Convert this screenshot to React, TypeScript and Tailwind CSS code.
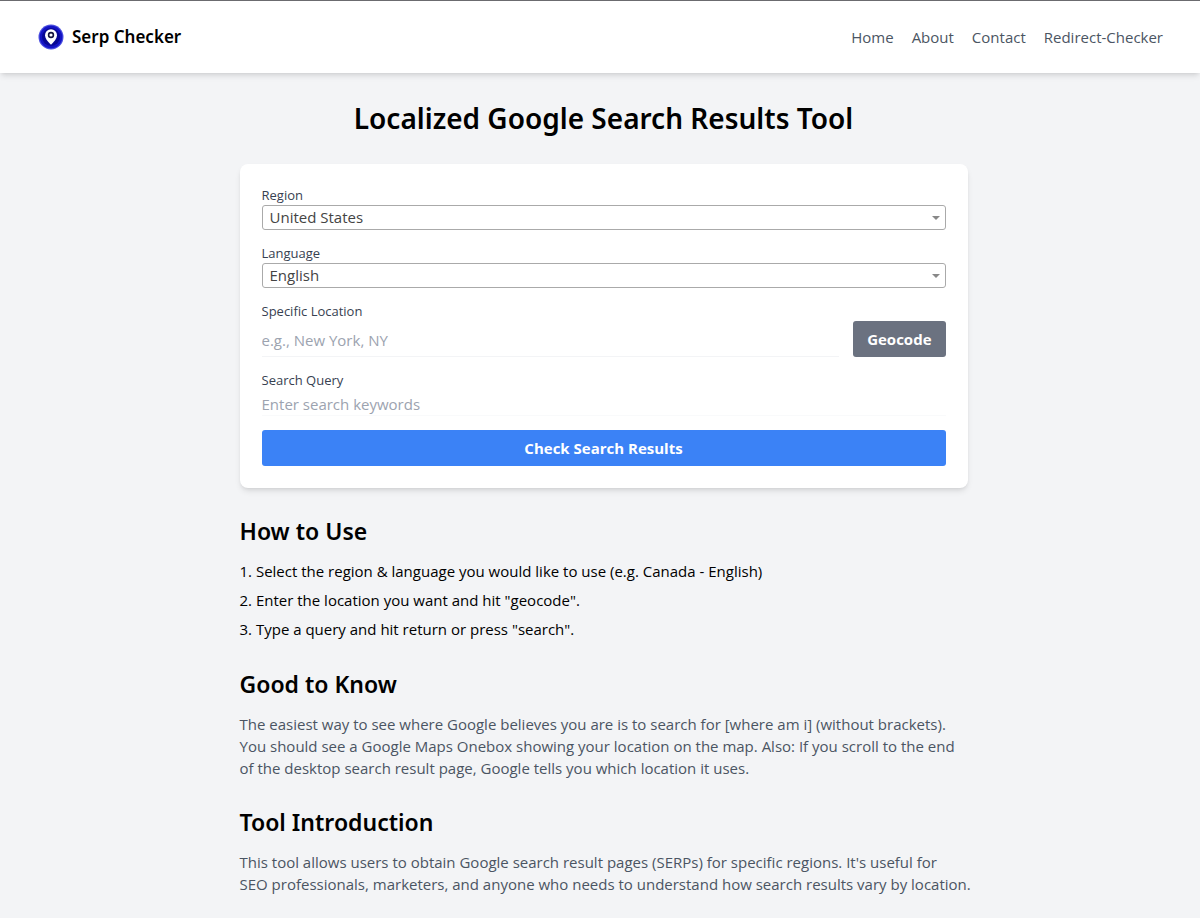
function Logo() {
  return (
    <svg viewBox="0 0 26 26" className="size-[26px]" aria-hidden="true">
      <circle cx="13" cy="13" r="12.500" fill="#4a4ee0" />
      <circle cx="13" cy="13" r="11.300" fill="#1414c4" />
      <circle cx="13" cy="13" r="9" fill="#080894" />
      <path d="M13 20.800c-3.400-3.600-6-6.400-6-9.600a6 6 0 0 1 12 0c0 3.200-2.600 6-6 9.600z" fill="#fff" />
      <circle cx="13" cy="11" r="2.400" fill="#fff" stroke="#14143c" strokeWidth="1.600" />
    </svg>
  );
}

const links = ["Home", "About", "Contact", "Redirect-Checker"];

const sectionHeading = "mb-[14px] font-['Noto_Sans',sans-serif] text-[23px] leading-[29px] font-semibold";

function SelectField({ id, label, options }: { id: string; label: string; options: string[] }) {
  return (
    <div className="mb-[14px]">
      <label htmlFor={id} className="block text-[13px] leading-[19px] text-[#374151]">{label}</label>
      <div className="grid items-center">
        <select id={id} className="col-start-1 row-start-1 h-[25px] w-full appearance-none rounded-[3px] border border-[#aaa] bg-white px-[7px] text-[15px] leading-[23px] text-[#444]">
          {options.map((o) => <option key={o}>{o}</option>)}
        </select>
        <svg viewBox="0 0 8 4" className="pointer-events-none col-start-1 row-start-1 mr-[6px] h-1 w-2 justify-self-end" aria-hidden="true">
          <path d="M0 0h8L4 4z" fill="#888" />
        </svg>
      </div>
    </div>
  );
}

export default function App() {
  return (
    <div className="min-h-screen bg-[#f3f4f6] font-['Open_Sans','Noto_Sans',sans-serif] text-[15px] leading-[22px] text-black">
      <header className="flex h-[73px] items-center justify-between border-t border-[#6b6b6f] bg-white pr-[37px] pl-[38px] shadow-md">
        <a href="#" className="flex items-center gap-2 font-['Noto_Sans',sans-serif] text-[17px] font-semibold"><Logo />Serp Checker</a>
        <nav className="flex gap-[18px] text-[#4b5563]">
          {links.map((l) => <a key={l} href="#">{l}</a>)}
        </nav>
      </header>
      <div className="pl-[7px]">
        <main className="mx-auto max-w-[728px] pt-[29px] pb-6">
          <h1 className="mb-[29px] text-center font-['Noto_Sans',sans-serif] text-[28px] leading-[33px] font-semibold">Localized Google Search Results Tool</h1>
          <form className="mb-[29px] rounded-lg bg-white p-[22px] shadow-md">
            <SelectField id="region" label="Region" options={["United States", "Canada"]} />
            <SelectField id="language" label="Language" options={["English", "French"]} />
            <div className="mb-[14px] flex items-end gap-[14px]">
              <div className="flex-1">
                <label htmlFor="location" className="block text-[13px] leading-[19px] text-[#374151]">Specific Location</label>
                <input id="location" placeholder="e.g., New York, NY" className="block h-9 w-full border-b border-[#f3f4f6] pt-0.5 placeholder:text-[#9ca3af]" />
              </div>
              <button type="button" className="h-9 rounded-[3px] bg-[#6b7280] px-[14px] font-bold text-white">Geocode</button>
            </div>
            <label htmlFor="query" className="block text-[13px] leading-[19px] text-[#374151]">Search Query</label>
            <input id="query" placeholder="Enter search keywords" className="mb-[14px] block h-[26px] w-full border-b border-[#f9fafb] pt-0.5 placeholder:text-[#9ca3af]" />
            <button type="submit" className="block h-9 w-full rounded-[3px] bg-[#3b82f6] font-bold text-white">Check Search Results</button>
          </form>
          <h2 className={sectionHeading}>How to Use</h2>
          <ol className="mb-[30px] list-inside list-decimal space-y-[7px]">
            <li>Select the region &amp; language you would like to use (e.g. Canada - English)</li>
            <li>Enter the location you want and hit "geocode".</li>
            <li>Type a query and hit return or press "search".</li>
          </ol>
          <h2 className={sectionHeading}>Good to Know</h2>
          <p className="mb-[29px] text-[#4b5563]">The easiest way to see where Google believes you are is to search for [where am i] (without brackets). You should see a Google Maps Onebox showing your location on the map. Also: If you scroll to the end of the desktop search result page, Google tells you which location it uses.</p>
          <h2 className={sectionHeading}>Tool Introduction</h2>
          <p className="text-[#4b5563] md:-mr-4">This tool allows users to obtain Google search result pages (SERPs) for specific regions. It's useful for <br className="hidden md:inline" />SEO professionals, marketers, and anyone who needs to understand how search results vary by location.</p>
        </main>
      </div>
    </div>
  );
}
